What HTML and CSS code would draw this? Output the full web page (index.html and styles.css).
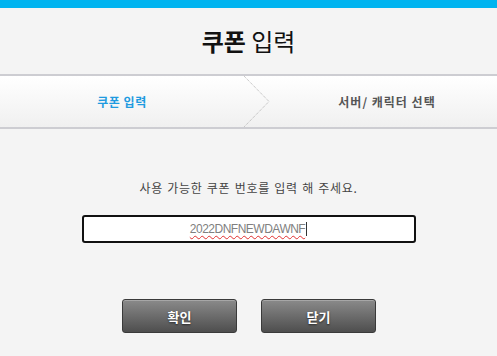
FILE: index.html
```html
<!DOCTYPE html>
<html>
<head>
    <title>쿠폰 입력</title>
    <link rel="stylesheet" href="styles.css">
</head>
<body>
    <div class="top-bar"></div>
    <h1 class="title"><b>쿠폰</b> 입력</h1>
    <div class="steps">
        <div class="step step-active">쿠폰 입력</div>
        <svg class="chevron" width="28" height="51" viewBox="0 0 28 51">
            <polyline points="0,0 25,25.5 0,51" fill="none" stroke="#b4b4b4" stroke-width="1" stroke-dasharray="1,1"/>
        </svg>
        <div class="step">서버/ 캐릭터 선택</div>
    </div>
    <div class="content">
        <p class="guide">사용 가능한 쿠폰 번호를 입력 해 주세요.</p>
        <div class="coupon-box"><span class="coupon-text">2022DNFNEWDAWNF</span><span class="caret"></span></div>
        <div class="buttons">
            <button class="btn">확인</button>
            <button class="btn">닫기</button>
        </div>
    </div>
</body>
</html>
```

FILE: styles.css
```css
body { margin: 0; background: #f4f4f4; font-family: "Noto Sans CJK KR", "Liberation Sans", sans-serif; width: 497px; height: 356px; overflow: hidden; }
.top-bar { height: 8px; background: #00b4f0; }
.title { margin: 0; height: 66px; line-height: 66px; text-align: center; font-size: 24px; font-weight: normal; color: #111; }
.title b { font-weight: bold; }
.steps { display: flex; align-items: center; height: 51px; border-top: 2px solid #cdcdd2; border-bottom: 2px solid #cdcdd2; background: linear-gradient(#ffffff, #f0f0f0); }
.step { flex: 1; text-align: center; font-size: 12px; font-weight: bold; color: #555; letter-spacing: 0.5px; }
.step-active { color: #1f9be0; }
.steps .step:first-child { flex: 0 0 244px; }
.steps .step:last-child { padding-left: 5px; letter-spacing: 1px; }
.chevron { flex: 0 0 28px; display: block; }
.content { display: flex; flex-direction: column; align-items: center; }
.guide { margin: 50px 0 0; font-size: 12px; color: #444; height: 18px; line-height: 18px; letter-spacing: 0.7px; word-spacing: 1px; }
.coupon-box { margin-top: 18px; width: 330px; height: 24px; border: 2px solid #111; border-radius: 3px; background: #fff; display: flex; align-items: center; justify-content: center; font-family: "Liberation Sans", sans-serif; font-size: 12px; color: #808080; letter-spacing: -0.5px; }
.coupon-text { text-decoration: underline wavy #e03030; text-decoration-thickness: 1px; text-underline-offset: 2px; }
.caret { width: 1px; height: 14px; background: #333; margin-left: 1px; }
.buttons { display: flex; gap: 24px; margin-top: 56px; margin-left: 1px; }
.btn { width: 115px; height: 34px; border: 1px solid #3a3a3a; border-radius: 3px; background: linear-gradient(#8a8a8a, #4e4e4e); color: #fff; font-family: "Noto Sans CJK KR", sans-serif; font-size: 13px; font-weight: bold; text-shadow: 0 1px 2px rgba(0,0,0,0.6); box-shadow: inset 0 1px 0 rgba(255,255,255,0.25); padding: 0; }
```
